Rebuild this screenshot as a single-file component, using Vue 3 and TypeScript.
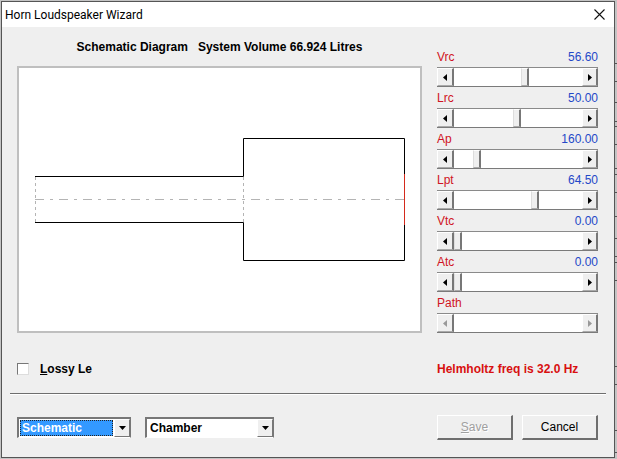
<script setup lang="ts">
import { ref } from 'vue'

interface Param {
  id: string
  label: string
  value: string
  position: number
  disabled?: boolean
}

const params = ref<Param[]>([
  { id: 'vrc', label: 'Vrc', value: '56.60', position: 67 },
  { id: 'lrc', label: 'Lrc', value: '50.00', position: 59 },
  { id: 'ap', label: 'Ap', value: '160.00', position: 19 },
  { id: 'lpt', label: 'Lpt', value: '64.50', position: 77 },
  { id: 'vtc', label: 'Vtc', value: '0.00', position: 0 },
  { id: 'atc', label: 'Atc', value: '0.00', position: 0 },
  { id: 'path', label: 'Path', value: '', position: 0, disabled: true },
])

const lossy = ref(false)
const view = ref('Schematic')
const section = ref('Chamber')

// Row lines of the sheet that lies behind the dialog
const sheetLines = [62, 80, 101, 120, 125, 143, 167, 173, 191, 215, 237, 255, 261, 279, 365, 383, 429, 451]

function step(p: Param, delta: number) {
  p.position = Math.min(120, Math.max(0, p.position + delta))
}
</script>

<template>
  <div class="desktop">
    <main class="dialog">
      <header class="titlebar">
        <h1>Horn Loudspeaker Wizard</h1>
        <button class="close" type="button" aria-label="Close">
          <svg width="11" height="11" viewBox="0 0 11 11"><path d="M.5 .5l10 10M10.5 .5l-10 10" stroke="#111" stroke-width="1.1" fill="none" /></svg>
        </button>
      </header>

      <div class="content">
        <section class="diagram">
          <h2><span>Schematic Diagram</span><span>System Volume 66.924 Litres</span></h2>
          <div class="plot">
            <svg viewBox="0 0 401 263" fill="none" stroke-width="1">
              <path d="M16.5 109V154M224.5 109V154" stroke="#b4b4b4" stroke-dasharray="3 3" />
              <path d="M16 131.5H385" stroke="#b4b4b4" stroke-dasharray="9 6 3 6" />
              <path d="M16 108.5H224.5V70.5H385.5V192.5H224.5V154.5H16" stroke="#000" />
              <path d="M385.5 106V157" stroke="#d42a1c" />
            </svg>
          </div>
        </section>

        <section class="params">
          <div v-for="p in params" :key="p.id" class="param">
            <div class="caption">
              <label :for="p.id">{{ p.label }}</label>
              <output :for="p.id">{{ p.value }}</output>
            </div>
            <div class="scroller">
              <button type="button" class="arrow" :disabled="p.disabled" :aria-label="p.label + ' down'" @click="step(p, -1)">
                <svg width="4" height="7" viewBox="0 0 4 7"><path d="M4 0v7L0 3.5z" fill="currentColor" /></svg>
              </button>
              <input :id="p.id" v-model.number="p.position" type="range" min="0" max="120" :disabled="p.disabled" />
              <button type="button" class="arrow" :disabled="p.disabled" :aria-label="p.label + ' up'" @click="step(p, 1)">
                <svg width="4" height="7" viewBox="0 0 4 7"><path d="M0 0v7L4 3.5z" fill="currentColor" /></svg>
              </button>
            </div>
          </div>
        </section>

        <label class="check"><input v-model="lossy" type="checkbox" /><span><u>L</u>ossy Le</span></label>
        <p class="status">Helmholtz freq is 32.0 Hz</p>
      </div>

      <hr />

      <footer class="actions">
        <div class="combo view">
          <select v-model="view" class="selected" aria-label="View"><option>Schematic</option></select>
          <span class="drop"><svg width="7" height="4" viewBox="0 0 7 4"><path d="M0 0h7L3.5 4z" fill="#000" /></svg></span>
        </div>
        <div class="combo section">
          <select v-model="section" aria-label="Section"><option>Chamber</option></select>
          <span class="drop"><svg width="7" height="4" viewBox="0 0 7 4"><path d="M0 0h7L3.5 4z" fill="#000" /></svg></span>
        </div>
        <button type="button" class="push save" disabled><u>S</u>ave</button>
        <button type="button" class="push">Cancel</button>
      </footer>
    </main>
    <svg class="sheet" width="2" height="457" aria-hidden="true">
      <path v-for="y in sheetLines" :key="y" :d="`M0 ${y}.5H2`" stroke="#555" />
    </svg>
  </div>
</template>

<style>
body {
  background: #c4c4c4;
}
</style>

<style scoped>
* {
  box-sizing: border-box;
}
.desktop {
  display: grid;
  grid-template-columns: 1fr 2px;
  padding: 1px 0 2px 1px;
  font: 12px/16px "Liberation Sans", Arial, sans-serif;
  color: #000;
}
.sheet {
  display: block;
}
.dialog {
  min-width: 0;
  border: 1px solid #555;
  background: #efefef;
}
h1,
h2,
p {
  margin: 0;
}
button,
select,
input {
  font: inherit;
  margin: 0;
}
.titlebar {
  display: flex;
  align-items: center;
  justify-content: space-between;
  height: 25px;
  padding: 0 9px 0 3px;
  background: #fff;
}
h1 {
  font: 12px/16px Roboto, sans-serif;
}
.close {
  display: flex;
  padding: 0;
  border: 0;
  background: none;
}
.content {
  display: grid;
  grid-template-columns: minmax(0, 1fr) 161px;
  column-gap: 15px;
  row-gap: 28px;
  padding: 0 16px 16px 15px;
}
h2 {
  display: flex;
  justify-content: center;
  gap: 10px;
  font: bold 12px/40px "Liberation Sans", Arial, sans-serif;
  height: 39px;
}
.plot {
  border: 2px solid #bfbfbf;
  background: #fff;
}
.plot svg {
  display: block;
  width: 100%;
}
.params {
  display: flex;
  flex-direction: column;
  gap: 5px;
  padding-top: 24px;
}
.caption {
  display: flex;
  justify-content: space-between;
  height: 16px;
  line-height: 13px;
  color: #d01424;
}
.caption output {
  color: #2448c8;
}
.scroller {
  display: grid;
  grid-template-columns: 17px 1fr 16px;
  height: 20px;
  border-top: 1px solid #8a8a8a;
  border-bottom: 1px solid #7a7a7a;
  background: #fff;
}
.arrow {
  display: flex;
  align-items: center;
  justify-content: center;
  padding: 0;
  border: 1px solid;
  border-color: #fff #777 #aaa #fff;
  border-right-width: 2px;
  background: #efefef;
  color: #000;
}
.arrow:disabled {
  color: #999;
}
input[type="range"] {
  appearance: none;
  width: 100%;
  height: 18px;
  background: #fff;
}
input[type="range"]::-webkit-slider-runnable-track {
  height: 18px;
}
input[type="range"]::-webkit-slider-thumb {
  appearance: none;
  box-sizing: border-box;
  width: 8px;
  height: 18px;
  border: 1px solid;
  border-color: #fff #777 #aaa #ddd;
  border-right-width: 2px;
  background: #efefef;
}
input[type="range"]:disabled::-webkit-slider-thumb {
  visibility: hidden;
}
.check {
  display: flex;
  align-items: center;
  gap: 11px;
  font-weight: bold;
}
.check input {
  appearance: none;
  width: 12px;
  height: 12px;
  border: 1px solid;
  border-color: #777 #ddd #ddd #777;
  background: #fff;
}
.check input:checked {
  box-shadow: inset 0 0 0 2px #fff;
  background: #000;
}
.status {
  font-weight: bold;
  color: #d81010;
}
hr {
  height: 2px;
  margin: 0 8px;
  border: 0;
  border-top: 1px solid #6e6e6e;
  background: #fff;
}
.actions {
  display: flex;
  align-items: center;
  padding: 20px 16px 16px 15px;
}
.combo {
  position: relative;
  height: 21px;
  padding: 1px;
  border: 1px solid;
  border-width: 2px 1px 1px 2px;
  border-color: #777 #777 #fff #777;
  background: #fff;
}
.combo.view {
  width: 114px;
}
.combo.section {
  width: 129px;
  margin: 0 auto 0 14px;
}
.combo select {
  appearance: none;
  display: block;
  width: calc(100% - 16px);
  height: 16px;
  padding: 0 2px;
  border: 0;
  background: #fff;
  color: #000;
  font-weight: bold;
  line-height: 16px;
}
.combo select.selected {
  background: #3399ff;
  color: #fff;
  outline: 1px dotted #222;
  outline-offset: -1px;
}
.drop {
  position: absolute;
  top: 0;
  right: 0;
  bottom: 0;
  width: 16px;
  display: flex;
  align-items: center;
  justify-content: center;
  border: 1px solid;
  border-color: #fff #777 #777 #fff;
  background: #efefef;
  pointer-events: none;
}
.push {
  width: 76px;
  height: 25px;
  padding: 0;
  border: 1px solid;
  border-width: 1px 2px 2px 1px;
  border-color: #fff #6e6e6e #6e6e6e #fff;
  background: #efefef;
  color: #000;
}
.save {
  margin-right: 9px;
}
.push:disabled {
  color: #a0a0a0;
  text-shadow: 1px 1px #fff;
}
</style>
